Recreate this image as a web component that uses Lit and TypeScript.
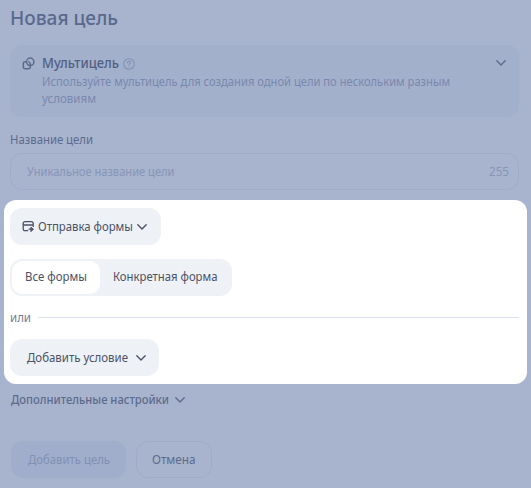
import { LitElement, html, css, svg } from "lit";
import { customElement } from "lit/decorators.js";

const chevron = html`<svg class="chev" width="12" height="12" viewBox="0 0 12 12">${svg`<path d="M1.8 3.8 6 8 10.2 3.8" />`}</svg>`;

// A single line of text, narrowed to the given advance width.
const line = (text: string, width: number, height = 17, baseline = 13) => html`<svg
  class="line" width=${width} height=${height}>${svg`<text x="0" y=${baseline} textLength=${width} lengthAdjust="spacingAndGlyphs">${text}</text>`}</svg>`;

@customElement("app-root")
export class AppRoot extends LitElement {
  static styles = css`
    :host {
      display: block;
      box-sizing: border-box;
      width: 531px;
      height: 488px;
      overflow: hidden;
      background: #a8b3cd;
      font: 400 12.8px/17px "Noto Sans", sans-serif;
      color: #5d6b8d;
      white-space: nowrap;
    }
    * { box-sizing: border-box; }
    svg { display: block; flex: none; fill: none; stroke: currentColor; stroke-linecap: round; stroke-linejoin: round; }
    .line { fill: currentColor; stroke: none; overflow: visible; }
    .chev { stroke-width: 1.4; }
    h1 { margin: 0; padding: 5px 0 0 10px; height: 45px; font-size: 19.5px; font-weight: 550; color: #5a698d; }
    .card { display: flex; margin: 0 12px 0 10px; height: 72px; padding: 9px 12px 0; border-radius: 12px; background: #a3b0cc; }
    .card > svg { margin-top: 3px; }
    .body { flex: 1; margin-left: 7px; }
    .head { display: flex; align-items: center; height: 19px; gap: 4px; font-size: 13.8px; font-weight: 550; color: #526083; }
    .head .line { margin-bottom: 1px; }
    .head svg:last-child { color: #8491b3; }
    .desc { color: #7a88ad; }
    .label { margin: 14px 0 0 9.5px; height: 22px; }
    .input { display: flex; justify-content: space-between; align-items: center; margin: 0 12px 0 10px; height: 37px; padding: 0 9px 0 16px; border: 1px solid #9fabc9; border-radius: 12px; color: #8795b7; }
    .panel { margin: 10px 4px 0; height: 184px; padding: 8px 8px 0 6px; border-radius: 12px; background: #fff; color: #4c5265; }
    .btn { display: flex; align-items: center; height: 37px; border-radius: 12px; background: #eef1f6; }
    .type { width: 151px; padding-left: 12px; }
    .type .chev { margin-left: 3px; }
    .type .line { margin-left: 4px; }
    .seg { display: flex; width: 222px; height: 37px; margin-top: 14px; padding: 2px; border-radius: 12px; background: #eef1f6; }
    .seg span { display: flex; align-items: center; justify-content: center; padding-bottom: 2px; }
    .seg .on { width: 88px; border-radius: 10px; background: #fff; }
    .seg .off { flex: 1; }
    .or { display: flex; align-items: center; height: 43px; gap: 7px; color: #727c96; }
    .or i { flex: 1; height: 1px; background: #dbe2ed; }
    .add { width: 149px; padding-left: 17px; }
    .add .chev { margin-left: 7px; }
    .more { display: flex; align-items: center; margin: 7px 0 0 11px; height: 17px; font-weight: 500; }
    .more .chev { margin-left: 5px; }
    .actions { display: flex; gap: 10px; margin: 33px 0 0 11px; }
    .actions span { display: flex; align-items: center; justify-content: center; height: 37px; border-radius: 12px; }
    .submit { width: 115px; background: #a0aecb; color: #8190b3; }
    .cancel { width: 76px; border: 1px solid #9fabc9; }
  `;

  render() {
    return html`
      <h1>${line("Новая цель", 108, 26, 20)}</h1>
      <div class="card">
        <svg width="13" height="13" viewBox="0 0 13 13" stroke-width="1.5">
          <circle cx="8.2" cy="4.8" r="3.7" />
          <path d="M3.6 4.8H3.2Q1.3 4.8 1.3 6.7V9.8Q1.3 11.8 3.2 11.8H6.3Q8.3 11.8 8.3 9.8V7Q8.2 5.6 6.8 4.9" />
        </svg>
        <div class="body">
          <div class="head">
            ${line("Мультицель", 77)}
            <svg width="12" height="12" viewBox="0 0 12 12" stroke-width="1.1">
              <circle cx="6" cy="6" r="5.3" />
              <path d="M4.5 4.8Q4.5 3.3 6 3.3T7.5 4.7Q7.5 5.5 6 6.2V7M6 8.7V8.8" />
            </svg>
          </div>
          <div class="desc">${line("Используйте мультицель для создания одной цели по нескольким разным", 408)}${line("условиям", 54)}</div>
        </div>
        ${chevron}
      </div>
      <div class="label">${line("Название цели", 83)}</div>
      <div class="input">${line("Уникальное название цели", 147.5)}${line("255", 20)}</div>
      <div class="panel">
        <div class="btn type">
          <svg width="12" height="13" viewBox="0 0 12 13" stroke-width="1.3">
            <path d="M5.6 10.7H3.2Q1.2 10.7 1.2 8.7V3.7Q1.2 1.7 3.2 1.7H9.2Q11.2 1.7 11.2 3.7V6.4M1.2 5H11.2M7 9.2H11" />
            <path d="M9.2 7.4 11.2 9.2 9.2 11.4Z" fill="currentColor" stroke-width="1" />
          </svg>
          ${line("Отправка формы", 95)}${chevron}
        </div>
        <div class="seg"><span class="on">${line("Все формы", 62)}</span><span class="off">${line("Конкретная форма", 104.5)}</span></div>
        <div class="or">${line("или", 21)}<i></i></div>
        <div class="btn add">${line("Добавить условие", 101)}${chevron}</div>
      </div>
      <div class="more">${line("Дополнительные настройки", 158)}${chevron}</div>
      <div class="actions"><span class="submit">${line("Добавить цель", 82)}</span><span class="cancel">${line("Отмена", 43.5)}</span></div>
    `;
  }
}
